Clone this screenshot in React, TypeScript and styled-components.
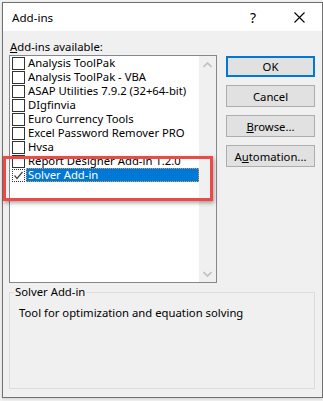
import React from "react";
import styled, { createGlobalStyle } from "styled-components";

const Global = createGlobalStyle`
  html, body { margin: 0; padding: 0; }
  body {
    background: #f3f3f3;
    font-family: "Noto Sans", "Open Sans", sans-serif;
    font-size: 11.3px;
    color: #000;
    width: 323px;
    height: 401px;
    overflow: hidden;
  }
`;

const Stage = styled.div`
  position: relative;
  width: 323px;
  height: 401px;
  padding: 2px 0 0 2px;
  box-sizing: border-box;
`;

const Window = styled.div`
  width: 321px;
  height: 396px;
  box-sizing: border-box;
  border: 1px solid #707070;
  background: #f0f0f0;
  display: flex;
  flex-direction: column;
  box-shadow: 0 1px 3px rgba(0, 0, 0, 0.15);
`;

const TitleBar = styled.div`
  height: 28px;
  background: #fff;
  display: flex;
  align-items: center;
  padding-left: 9px;
  box-sizing: border-box;
`;

const Title = styled.div`
  flex: 1;
  font-size: 11.6px;
  padding-top: 1px;
`;

const TitleButton = styled.div`
  width: 46px;
  height: 28px;
  display: flex;
  align-items: center;
  justify-content: center;
  font-size: 14px;
`;

const Body = styled.div`
  flex: 1;
  display: flex;
  flex-direction: column;
  padding: 7px 7px 8px 6px;
`;

const Top = styled.div`
  display: flex;
  align-items: flex-start;
`;

const LeftCol = styled.div`
  display: flex;
  flex-direction: column;
  width: 210px;
`;

const Label = styled.div`
  height: 17px;
  line-height: 17px;
  padding-left: 1px;
  u { text-decoration: underline; }
`;

const ListBox = styled.div`
  height: 228px;
  box-sizing: border-box;
  border: 1px solid #828790;
  background: #fff;
  display: flex;
`;

const Items = styled.div`
  flex: 1;
  padding: 0 0 0 2px;
  display: flex;
  flex-direction: column;
`;

const Row = styled.div`
  height: 14px;
  display: flex;
  align-items: flex-start;
`;

const Check = styled.div<{ $focus?: boolean }>`
  width: 13px;
  height: 13px;
  margin-top: 1px;
  box-sizing: border-box;
  border: 1px ${(p) => (p.$focus ? "dotted" : "solid")} #333;
  background: #fff;
  margin-right: 1px;
  display: flex;
  align-items: center;
  justify-content: center;
  flex: none;
`;

const ItemText = styled.div<{ $sel?: boolean }>`
  height: 14px;
  line-height: 14px;
  padding: 0 2px 0 2px;
  white-space: nowrap;
  box-sizing: border-box;
  ${(p) =>
    p.$sel
      ? `background:#0078d7;color:#fff;flex:1;outline:1px dotted #d8a050;outline-offset:-1px;`
      : ``}
`;

const ScrollBar = styled.div`
  width: 17px;
  background: #f0f0f0;
  display: flex;
  flex-direction: column;
  justify-content: space-between;
  align-items: center;
`;

const Arrow = styled.div`
  width: 17px;
  height: 17px;
  display: flex;
  align-items: center;
  justify-content: center;
`;

const RightCol = styled.div`
  display: flex;
  flex-direction: column;
  gap: 8px;
  padding-top: 18px;
  margin-left: 9px;
`;

const Button = styled.div<{ $default?: boolean }>`
  width: 89px;
  height: ${(p) => (p.$default ? 21 : 22)}px;
  box-sizing: border-box;
  background: #e1e1e1;
  border: ${(p) => (p.$default ? "2px solid #0078d7" : "1px solid #adadad")};
  display: flex;
  align-items: center;
  justify-content: center;
  u { text-decoration: underline; }
`;

const Group = styled.fieldset`
  margin: 2px 0 0 0;
  padding: 0 8px;
  border: 1px solid #dcdcdc;
  flex: 1;
  min-width: 0;
  legend {
    padding: 0 1px;
    margin-left: -4px;
    line-height: 14px;
  }
`;

const Desc = styled.div`
  padding: 6px 0 0 1px;
  line-height: 16px;
`;

const Highlight = styled.div`
  position: absolute;
  left: 3px;
  top: 156px;
  width: 210px;
  height: 45px;
  box-sizing: border-box;
  border: 3px solid #eb4a45;
  box-shadow: 1px 2px 4px rgba(0, 0, 0, 0.35);
  pointer-events: none;
`;

const items = [
  "Analysis ToolPak",
  "Analysis ToolPak - VBA",
  "ASAP Utilities 7.9.2 (32+64-bit)",
  "DIgfinvia",
  "Euro Currency Tools",
  "Excel Password Remover PRO",
  "Hvsa",
  "Report Designer Add-in 1.2.0",
];

export default function App() {
  return (
    <>
      <Global />
      <Stage>
        <Window>
          <TitleBar>
            <Title>Add-ins</Title>
            <TitleButton>?</TitleButton>
            <TitleButton>
              <svg width="11" height="11" viewBox="0 0 11 11">
                <path d="M0.5 0.5 L10.5 10.5 M10.5 0.5 L0.5 10.5" stroke="#000" strokeWidth="1.1" />
              </svg>
            </TitleButton>
          </TitleBar>
          <Body>
            <Top>
              <LeftCol>
                <Label>
                  <u>A</u>dd-ins available:
                </Label>
                <ListBox>
                  <Items>
                    {items.map((t) => (
                      <Row key={t}>
                        <Check />
                        <ItemText>{t}</ItemText>
                      </Row>
                    ))}
                    <Row>
                      <Check $focus>
                        <svg width="11" height="11" viewBox="0 0 11 11">
                          <path d="M1.5 5.5 L4 8.5 L9.5 2" stroke="#444" strokeWidth="1.2" fill="none" />
                        </svg>
                      </Check>
                      <ItemText $sel>Solver Add-in</ItemText>
                    </Row>
                  </Items>
                  <ScrollBar>
                    <Arrow>
                      <svg width="9" height="6" viewBox="0 0 9 6">
                        <path d="M0.5 5 L4.5 1 L8.5 5" stroke="#c0c0c0" strokeWidth="1.6" fill="none" />
                      </svg>
                    </Arrow>
                    <Arrow>
                      <svg width="9" height="6" viewBox="0 0 9 6">
                        <path d="M0.5 1 L4.5 5 L8.5 1" stroke="#c0c0c0" strokeWidth="1.6" fill="none" />
                      </svg>
                    </Arrow>
                  </ScrollBar>
                </ListBox>
              </LeftCol>
              <RightCol>
                <Button $default>OK</Button>
                <Button>Cancel</Button>
                <Button>
                  <span>
                    <u>B</u>rowse...
                  </span>
                </Button>
                <Button>
                  <span>
                    A<u>u</u>tomation...
                  </span>
                </Button>
              </RightCol>
            </Top>
            <Group>
              <legend>Solver Add-in</legend>
              <Desc>Tool for optimization and equation solving</Desc>
            </Group>
          </Body>
        </Window>
        <Highlight />
      </Stage>
    </>
  );
}
